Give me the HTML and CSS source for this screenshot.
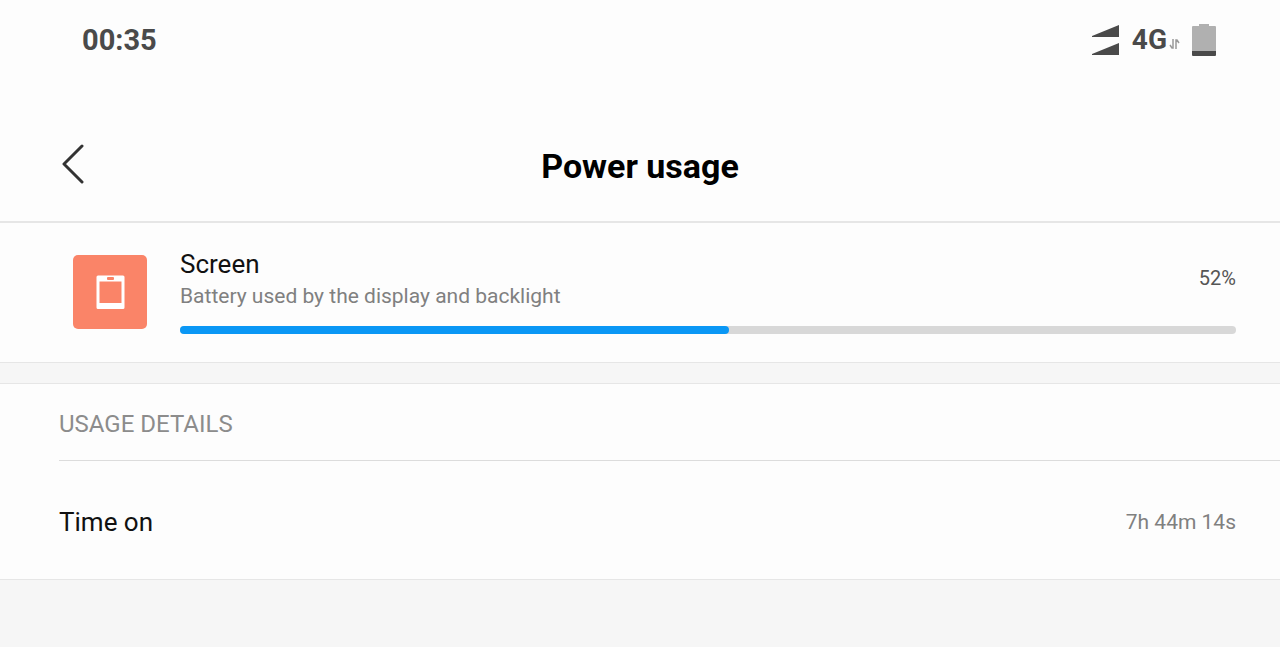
FILE: index.html
```
<!DOCTYPE html>
<html lang="en">
<head>
  <meta charset="UTF-8">
  <meta name="viewport" content="width=device-width, initial-scale=1.0">
  <title>Power usage</title>
  <link rel="stylesheet" href="styles.css">
</head>
<body>
  <div class="status-bar">
    <span class="clock">00:35</span>
    <div class="status-icons">
      <svg class="signal" width="28" height="32" viewBox="0 0 28 32" aria-hidden="true">
        <path d="M0 12 L27 1 V13 H0 Z M0 30 L27 19 V31 H0 Z" fill="#4a4a4a"/>
      </svg>
      <div class="network">
        <span>4G</span>
        <svg width="11" height="12" viewBox="0 0 11 12" fill="none" stroke="#999" stroke-width="1.500" aria-hidden="true">
          <path d="M4 1 V10 H3 L1 7 M7 11 V2 H8 L10 5"/>
        </svg>
      </div>
      <svg class="battery" width="24" height="32" viewBox="0 0 24 32" aria-hidden="true">
        <path d="M1 2 H7 V0 H17 V2 H23 Q24 2 24 3 V27 H0 V3 Q0 2 1 2 Z" fill="#b0b0b0"/>
        <path d="M0 27 H24 V31 Q24 32 23 32 H1 Q0 32 0 31 Z" fill="#4a4a4a"/>
      </svg>
    </div>
  </div>

  <header class="header">
    <button class="back" type="button" aria-label="Back">
      <svg width="24" height="44" viewBox="0 0 24 44" fill="none" stroke="#333" stroke-width="3" stroke-linecap="round" stroke-linejoin="round">
        <path d="M22 2 L4 20 L22 38"/>
      </svg>
    </button>
    <h1>Power usage</h1>
  </header>

  <main>
    <section class="summary">
      <svg class="app-icon" width="74" height="74" viewBox="0 0 74 74" aria-hidden="true">
        <rect width="74" height="74" rx="5" fill="#fa8468"/>
        <path fill="#fff" fill-rule="evenodd" d="M25 20.500 H50 Q51.500 20.500 51.500 22 V52.500 Q51.500 54 50 54 H25 Q23.500 54 23.500 52.500 V22 Q23.500 20.500 25 20.500 Z M26.500 26.500 V48 H48.500 V26.500 Z"/>
        <rect x="34" y="22" width="7" height="3" rx="1" fill="#fa8468"/>
      </svg>
      <div class="summary-body">
        <div class="summary-row">
          <div>
            <h2>Screen</h2>
            <p>Battery used by the display and backlight</p>
          </div>
          <span class="percent">52%</span>
        </div>
        <div class="bar" role="progressbar" aria-label="Screen" aria-valuenow="52" aria-valuemin="0" aria-valuemax="100">
          <div class="bar-fill" style="width: 52%"></div>
        </div>
      </div>
    </section>

    <section class="details">
      <h2>USAGE DETAILS</h2>
      <dl class="detail-row">
        <dt>Time on</dt>
        <dd>7h 44m 14s</dd>
      </dl>
    </section>
  </main>
</body>
</html>
```
FILE: styles.css
```
* {
  box-sizing: border-box;
}

body {
  margin: 0;
  min-height: 100vh;
  background-color: #f6f6f6;
  color: #111;
  font-family: Roboto, Arial, sans-serif;
}

h1, h2, p, dl, dd {
  margin: 0;
}

.status-bar {
  display: flex;
  justify-content: space-between;
  align-items: center;
  height: 79px;
  padding: 0 64px 0 82px;
  background-color: #fdfdfd;
  color: #4a4a4a;
  font-size: 29px;
  font-weight: bold;
}

.status-icons {
  display: flex;
  align-items: center;
  gap: 12px;
}

.network {
  display: flex;
  align-items: center;
  gap: 2px;
  font-size: 28px;
}

.network svg {
  margin-top: 8px;
}

.header {
  display: grid;
  grid-template-columns: 1fr auto 1fr;
  align-items: center;
  height: 144px;
  padding: 32px 60px 0;
  background-color: #fdfdfd;
  border-bottom: 2px solid #e6e6e6;
}

.back {
  justify-self: start;
  padding: 0;
  border: none;
  background: none;
  cursor: pointer;
}

.back svg {
  display: block;
}

h1 {
  color: #000;
  font-size: 34px;
  font-weight: bold;
}

.summary {
  display: flex;
  align-items: flex-end;
  gap: 33px;
  padding: 25px 44px 28px 73px;
  background-color: #fdfdfd;
  border-bottom: 1px solid #e6e6e6;
}

.app-icon {
  flex: none;
  margin-bottom: 5px;
}

.summary-body {
  flex: 1;
}

.summary-row {
  display: flex;
  justify-content: space-between;
  align-items: center;
}

.summary h2 {
  font-size: 26px;
  font-weight: normal;
  line-height: 32px;
}

.summary p {
  color: #808080;
  font-size: 21px;
  line-height: 32px;
}

.percent {
  padding-bottom: 4px;
  color: #555;
  font-size: 20px;
}

.bar {
  height: 8px;
  margin-top: 14px;
  border-radius: 4px;
  background-color: #d8d8d8;
}

.bar-fill {
  height: 100%;
  border-radius: 4px;
  background-color: #0a97f5;
}

.details {
  margin-top: 20px;
  padding-left: 59px;
  background-color: #fdfdfd;
  border-top: 1px solid #e6e6e6;
  border-bottom: 1px solid #e6e6e6;
}

.details h2 {
  padding: 24px 0 20px;
  border-bottom: 1px solid #dcdcdc;
  color: #8c8c8c;
  font-size: 24px;
  font-weight: normal;
  line-height: 32px;
}

.detail-row {
  display: flex;
  justify-content: space-between;
  align-items: center;
  height: 118px;
  padding: 4px 44px 0 0;
  font-size: 26px;
}

.detail-row dd {
  color: #808080;
  font-size: 21px;
}
```
